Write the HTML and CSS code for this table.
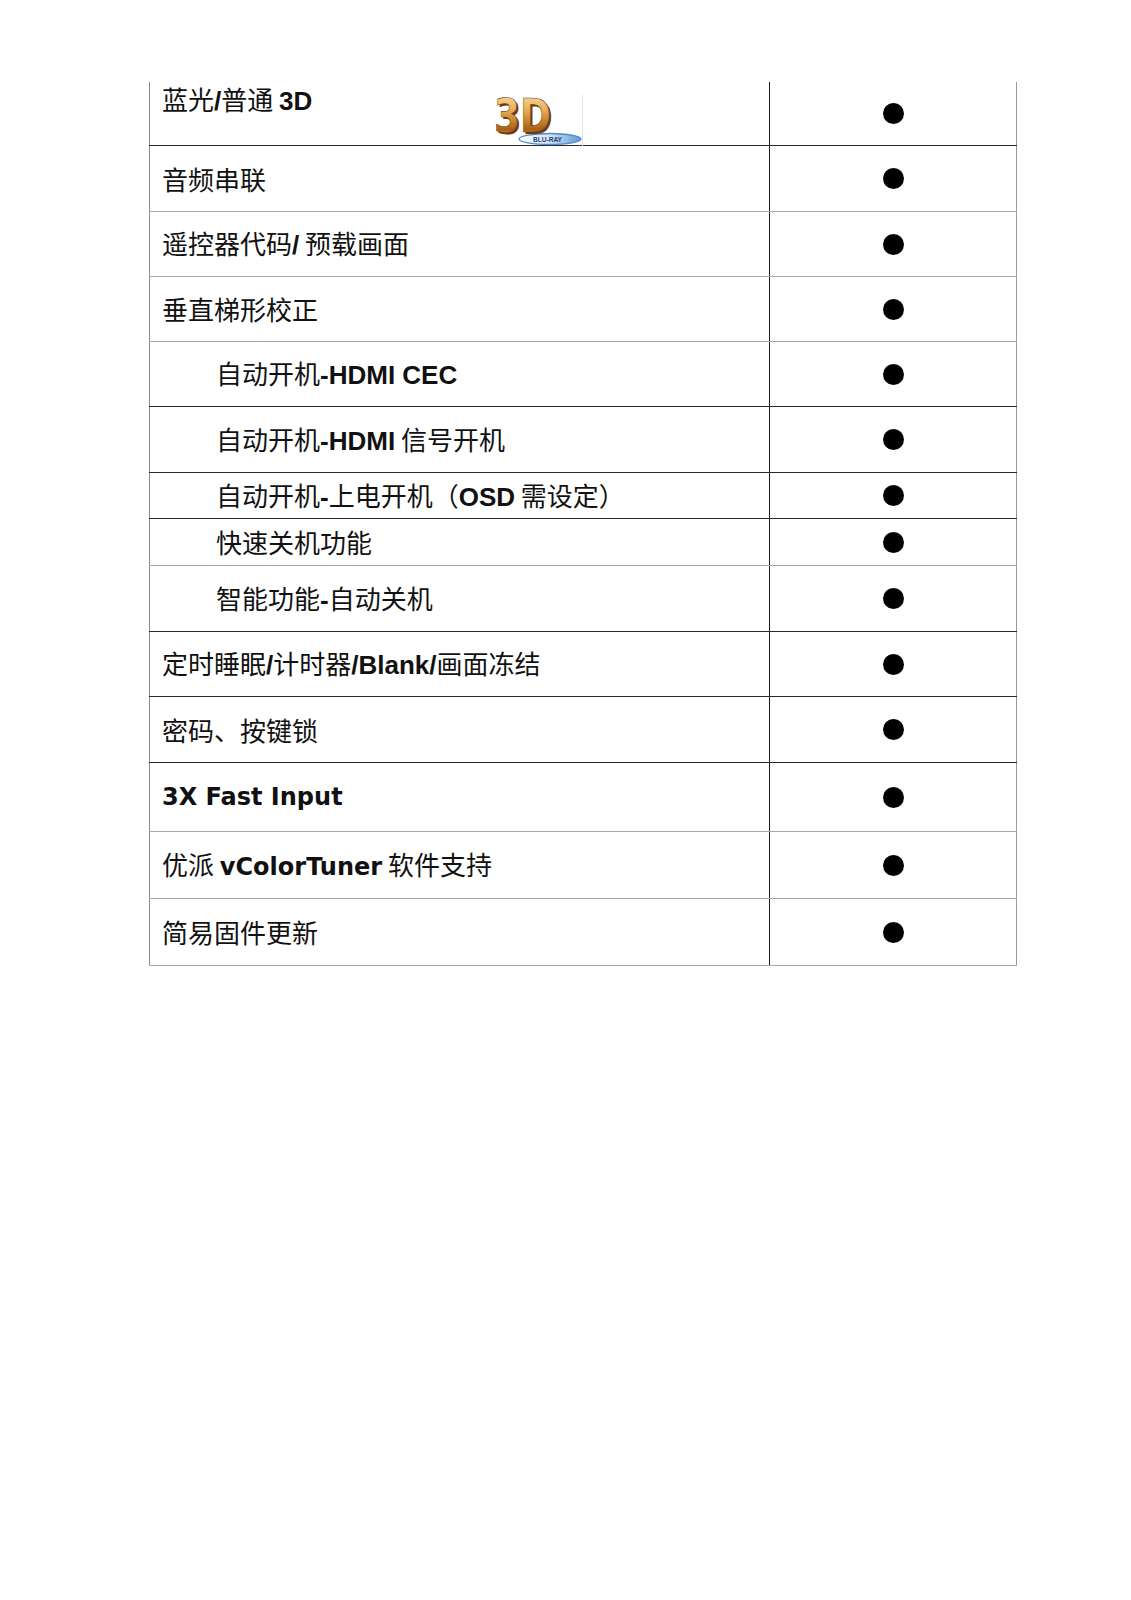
FILE: index.html
```html
<!DOCTYPE html>
<html lang="zh-CN">
<head>
<meta charset="utf-8">
<title>功能列表</title>
<link rel="stylesheet" href="styles.css">
</head>
<body>
<div class="page">
  <div class="spec">
    <div class="row h64 line-dark">
      <div class="feat top">
        <span class="first-text">蓝光<b class="lat">/</b>普通 <b class="lat">3D</b></span>
        <svg class="logo" viewBox="0 0 90 51" width="90" height="51" aria-label="3D Blu-ray">
          <defs>
            <linearGradient id="gold" x1="0" y1="0" x2="0" y2="1">
              <stop offset="0" stop-color="#fde9b4"/>
              <stop offset="0.4" stop-color="#e6ab55"/>
              <stop offset="0.75" stop-color="#a8601a"/>
              <stop offset="1" stop-color="#f2c679"/>
            </linearGradient>
            <linearGradient id="blue" x1="0" y1="0" x2="1" y2="0">
              <stop offset="0" stop-color="#ffffff"/>
              <stop offset="0.5" stop-color="#d3e3f4"/>
              <stop offset="1" stop-color="#5b98d4"/>
            </linearGradient>
          </defs>
          <ellipse cx="57" cy="44" rx="31" ry="5.5" fill="url(#blue)" stroke="#4c8ccc" stroke-width="1.3"/>
          <text x="3" y="39" font-family="DejaVu Sans, sans-serif" font-weight="bold" font-size="46" textLength="57" lengthAdjust="spacingAndGlyphs" fill="#6e3b0e">3D</text>
          <text x="1" y="37" font-family="DejaVu Sans, sans-serif" font-weight="bold" font-size="46" textLength="57" lengthAdjust="spacingAndGlyphs" fill="url(#gold)" stroke="#7a4512" stroke-width="0.6">3D</text>
          <text x="40" y="46.5" font-family="Liberation Sans, sans-serif" font-weight="bold" font-size="7" textLength="29" lengthAdjust="spacingAndGlyphs" fill="#1d3f80">BLU-RAY</text>
          <line x1="89.5" y1="0" x2="89.5" y2="51" stroke="#e2e2e2" stroke-width="1"/>
        </svg>
      </div>
      <div class="mark"><span class="dot"></span></div>
    </div>
    <div class="row h66 line-grey">
      <div class="feat"><span>音频串联</span></div>
      <div class="mark"><span class="dot"></span></div>
    </div>
    <div class="row h65 line-grey">
      <div class="feat"><span>遥控器代码<b class="lat">/</b> 预载画面</span></div>
      <div class="mark"><span class="dot"></span></div>
    </div>
    <div class="row h65 line-grey">
      <div class="feat"><span>垂直梯形校正</span></div>
      <div class="mark"><span class="dot"></span></div>
    </div>
    <div class="row h65 line-dark">
      <div class="feat indent"><span>自动开机<b class="lat">-HDMI CEC</b></span></div>
      <div class="mark"><span class="dot"></span></div>
    </div>
    <div class="row h66 line-dark">
      <div class="feat indent"><span>自动开机<b class="lat">-HDMI</b> 信号开机</span></div>
      <div class="mark"><span class="dot"></span></div>
    </div>
    <div class="row h45 line-dark">
      <div class="feat indent"><span>自动开机<b class="lat">-</b>上电开机（<b class="lat">OSD</b> 需设定）</span></div>
      <div class="mark"><span class="dot"></span></div>
    </div>
    <div class="row h47 line-grey">
      <div class="feat indent"><span>快速关机功能</span></div>
      <div class="mark"><span class="dot"></span></div>
    </div>
    <div class="row h66 line-dark">
      <div class="feat indent"><span>智能功能<b class="lat">-</b>自动关机</span></div>
      <div class="mark"><span class="dot"></span></div>
    </div>
    <div class="row h65 line-dark">
      <div class="feat"><span>定时睡眠<b class="lat">/</b>计时器<b class="lat">/Blank/</b>画面冻结</span></div>
      <div class="mark"><span class="dot"></span></div>
    </div>
    <div class="row h66 line-dark">
      <div class="feat"><span>密码、按键锁</span></div>
      <div class="mark"><span class="dot"></span></div>
    </div>
    <div class="row h69 line-grey">
      <div class="feat"><b class="verd">3X Fast Input</b></div>
      <div class="mark"><span class="dot"></span></div>
    </div>
    <div class="row h67 line-grey">
      <div class="feat"><span>优派 <b class="verd">vColorTuner</b> 软件支持</span></div>
      <div class="mark"><span class="dot"></span></div>
    </div>
    <div class="row h67 line-grey">
      <div class="feat"><span>简易固件更新</span></div>
      <div class="mark"><span class="dot"></span></div>
    </div>
  </div>
</div>
</body>
</html>
```
FILE: styles.css
```css
* { box-sizing: border-box; }
html, body { margin: 0; padding: 0; background: #ffffff; }
body { width: 1131px; min-height: 1600px; color: #111; }

.page { padding: 82px 0 0 149px; }

.spec { width: 868px; display: flex; flex-direction: column; }

.row { display: flex; border-bottom: 1px solid #999; }
.line-dark { border-bottom-color: #2a2a2a; }
.line-grey { border-bottom-color: #a8a8a8; }

.h45 { height: 46px; }
.h47 { height: 47px; }
.h64 { height: 64px; }
.h65 { height: 65px; }
.h66 { height: 66px; }
.h67 { height: 67px; }
.h69 { height: 69px; }

.feat {
  width: 620px;
  border-left: 1px solid #8a8a8a;
  display: flex;
  align-items: center;
  padding-left: 12px;
  font-family: "Noto Sans CJK SC", "Liberation Sans", sans-serif;
  font-size: 26px;
  line-height: 30px;
  white-space: nowrap;
}
.feat.indent { padding-left: 66px; }
.feat.top { align-items: flex-start; padding-top: 2px; }

.lat { font-family: "Liberation Sans", Arial, sans-serif; font-weight: bold; }
.verd { font-family: "DejaVu Sans", Verdana, sans-serif; font-weight: bold; font-size: 24px; }

.first-text { width: 331px; flex: none; }
.logo { flex: none; align-self: flex-end; margin-bottom: -1px; display: block; overflow: visible; }

.mark {
  width: 248px;
  border-left: 1px solid #1a1a1a;
  border-right: 1px solid #9a9a9a;
  display: flex;
  align-items: center;
  justify-content: center;
  padding-left: 1px;
}
.dot {
  width: 21px;
  height: 21px;
  border-radius: 50%;
  background: #000;
  display: block;
}
```
